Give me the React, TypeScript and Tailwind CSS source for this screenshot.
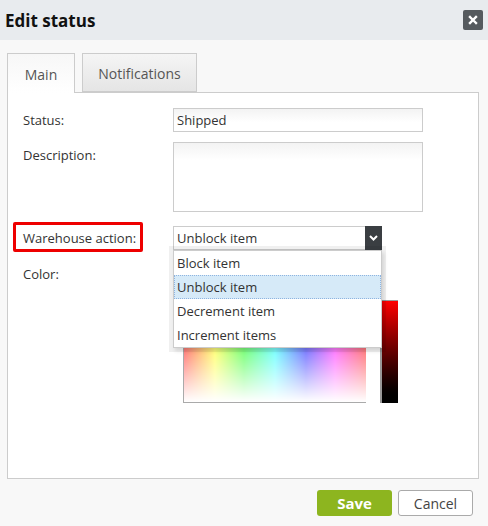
import React from "react";

const options = ["Block item", "Unblock item", "Decrement item", "Increment items"];

export default function App() {
  return (
    <div className="h-[526px] w-[488px] overflow-hidden bg-[#f8f8f8] font-['Open_Sans',sans-serif] text-[13px] text-[#333]">
      {/* Header */}
      <div className="flex h-[40px] items-center justify-between bg-[#e8ebee] pl-[5px] pr-[5px]">
        <h1 className="pt-px text-[17px] font-bold text-[#111]">Edit status</h1>
        <button className="flex h-[20px] w-[20px] items-center justify-center rounded-[2px] bg-[#555a5e]">
          <svg width="10" height="10" viewBox="0 0 10 10">
            <path d="M2 2 L8 8 M8 2 L2 8" stroke="#fff" strokeWidth="2.4" strokeLinecap="square" />
          </svg>
        </button>
      </div>

      {/* Body */}
      <div className="pl-[7px] pr-[9px] pt-[13px]">
        {/* Tabs */}
        <div className="relative z-10 flex h-[39px] items-stretch gap-[7px]">
          <div className="-mb-px flex w-[68px] items-center justify-center border border-b-0 border-[#ccc] bg-gradient-to-b from-[#f7f7f7] to-white pt-px text-[14px] text-[#555]">
            Main
          </div>
          <div className="flex w-[115px] items-center justify-center border border-[#ccc] bg-gradient-to-b from-[#f5f5f5] to-[#e5e5e5] pt-px text-[14px] text-[#555]">
            Notifications
          </div>
        </div>

        {/* Panel */}
        <div className="h-[387px] border border-[#ccc] bg-white pl-[15px] pt-[15px]">
          <div className="grid grid-cols-[150px_250px] items-start gap-y-[10px]">
            <div className="flex h-[24px] items-center pt-px">Status:</div>
            <div className="flex h-[24px] items-center border border-[#ccc] bg-gradient-to-b from-[#f3f3f3] to-white to-60% pl-[3px] pt-px">
              Shipped
            </div>

            <div className="pt-[4px]">Description:</div>
            <div className="h-[70px] border border-[#ccc] bg-gradient-to-b from-[#f3f3f3] to-white to-25%" />
          </div>

          <div className="mt-[14px] grid grid-cols-[150px_250px] items-start">
            <div className="relative flex h-[24px] items-center pt-px">
              <span>Warehouse action:</span>
              <div className="absolute -left-[10px] -top-[4px] h-[30px] w-[130px] rounded-[2px] border-[3px] border-[#ee0000]" />
            </div>
            <div className="relative">
              <div className="flex h-[24px] w-[209px] items-stretch border border-[#ccc] bg-white">
                <span className="flex flex-1 items-center pl-[3px] pt-px">Unblock item</span>
                <span className="-my-px -mr-px flex w-[17px] items-center justify-center bg-[#3a3e42]">
                  <svg width="9" height="6" viewBox="0 0 9 6">
                    <path d="M1 1 L4.5 4.5 L8 1" stroke="#fff" strokeWidth="2" fill="none" />
                  </svg>
                </span>
              </div>

              {/* Dropdown */}
              <ul className="absolute left-0 top-[24px] z-20 w-[209px] border border-[#ccc] bg-white shadow-[0_0_0_4px_rgba(0,0,0,0.06),2px_3px_4px_rgba(0,0,0,0.12)]">
                {options.map((o) => (
                  <li
                    key={o}
                    className={
                      o === "Unblock item"
                        ? "flex h-[24px] items-center border border-dotted border-[#8fb4e0] bg-[#d6eaf8] pl-[2px] pt-px"
                        : "flex h-[24px] items-center border border-transparent pl-[2px] pt-px"
                    }
                  >
                    {o}
                  </li>
                ))}
              </ul>
            </div>
          </div>

          <div className="mt-[12px] grid grid-cols-[150px_250px] items-start">
            <div className="flex h-[24px] items-center pt-px">Color:</div>
            <div className="flex gap-[14px] pl-[10px] pt-[38px]">
              <div className="relative h-[103px] w-[183px] border-b border-l border-[#aaa] bg-[linear-gradient(to_right,#ff0000,#ffff00_17%,#00ff00_33%,#00ffff_50%,#0000ff_67%,#ff00ff_83%,#ff0000)]">
                <div className="absolute inset-0 bg-gradient-to-b from-transparent to-white" />
              </div>
              <div className="h-[103px] w-[18px] border-l-2 border-t border-[#999] bg-gradient-to-b from-[#ff0000] to-black" />
            </div>
          </div>
        </div>

        {/* Footer */}
        <div className="mt-[11px] flex justify-end gap-[6px] pr-[6px]">
          <button className="flex h-[26px] w-[75px] items-center justify-center rounded-[3px] bg-[#8db51f] text-[15px] font-bold text-white">
            Save
          </button>
          <button className="flex h-[26px] w-[75px] items-center justify-center rounded-[3px] border border-[#aaa] bg-white text-[14px] text-[#444]">
            Cancel
          </button>
        </div>
      </div>
    </div>
  );
}
